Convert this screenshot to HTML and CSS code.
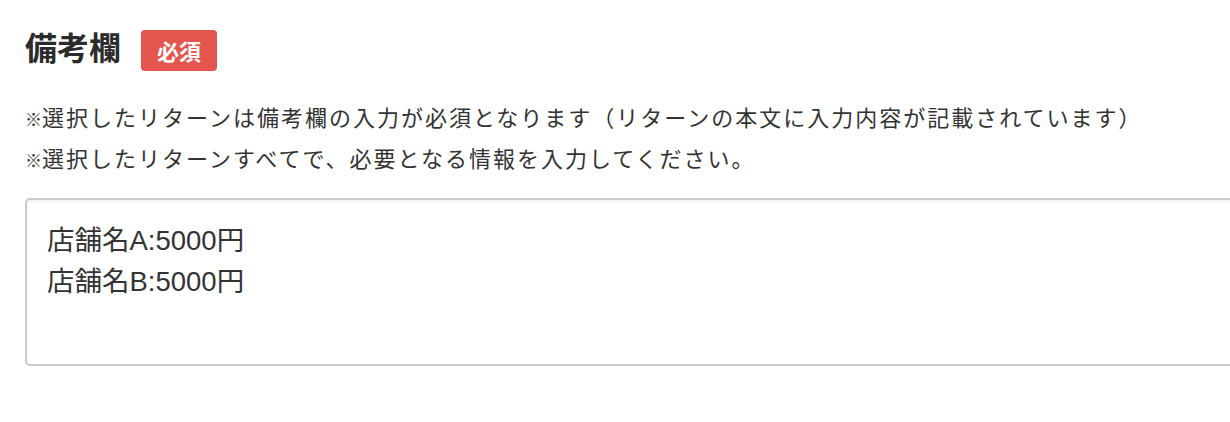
FILE: index.html
```html
<!DOCTYPE html>
<html lang="ja">
<head>
<meta charset="utf-8">
<title>備考欄</title>
<link rel="stylesheet" href="styles.css">
</head>
<body>
<div class="page">
  <div class="field-head">
    <h2 class="field-title">備考欄</h2>
    <span class="badge">必須</span>
  </div>
  <div class="notes">
    <p class="note"><span class="mark">※</span>選択したリターンは備考欄の入力が必須となります（リターンの本文に入力内容が記載されています）</p>
    <p class="note"><span class="mark">※</span>選択したリターンすべてで、必要となる情報を入力してください。</p>
  </div>
  <textarea class="remarks" readonly>店舗名A:5000円
店舗名B:5000円</textarea>
</div>
</body>
</html>
```

FILE: styles.css
```css
html, body {
  margin: 0;
  padding: 0;
  background: #ffffff;
  overflow: hidden;
}

body {
  font-family: "Liberation Sans", "Noto Sans CJK JP", sans-serif;
  color: #333333;
}

.page {
  padding: 25px 0 0 25px;
  width: 1300px;
}

.field-head {
  display: flex;
  align-items: flex-start;
  gap: 20px;
  height: 47px;
}

.field-title {
  margin: 0;
  font-family: "Noto Sans CJK JP", sans-serif;
  font-size: 32px;
  font-weight: 700;
  line-height: 42px;
  color: #2b2b2b;
}

.badge {
  margin-top: 5px;
  display: inline-block;
  background: #e4554e;
  color: #ffffff;
  font-family: "Noto Sans CJK JP", sans-serif;
  font-size: 22px;
  font-weight: 700;
  line-height: 41px;
  height: 41px;
  padding: 0 16px;
  border-radius: 4px;
}

.notes {
  margin-top: 25px;
}

.note {
  margin: 0;
  font-family: "Noto Sans CJK JP", sans-serif;
  font-size: 22px;
  line-height: 38px;
  letter-spacing: 2px;
  color: #333333;
}

.mark {
  font-size: 17px;
  letter-spacing: 0;
}

.remarks {
  display: block;
  box-sizing: border-box;
  margin-top: 19px;
  width: 1260px;
  height: 168px;
  padding: 20px 20px 18px;
  border: 2px solid #cccccc;
  border-radius: 5px;
  box-shadow: inset 0 2px 3px rgba(0, 0, 0, 0.06);
  font-family: "Liberation Sans", "Noto Sans CJK JP", sans-serif;
  font-size: 27.5px;
  line-height: 41px;
  color: #333333;
  resize: none;
  outline: none;
  background: #ffffff;
}
```
